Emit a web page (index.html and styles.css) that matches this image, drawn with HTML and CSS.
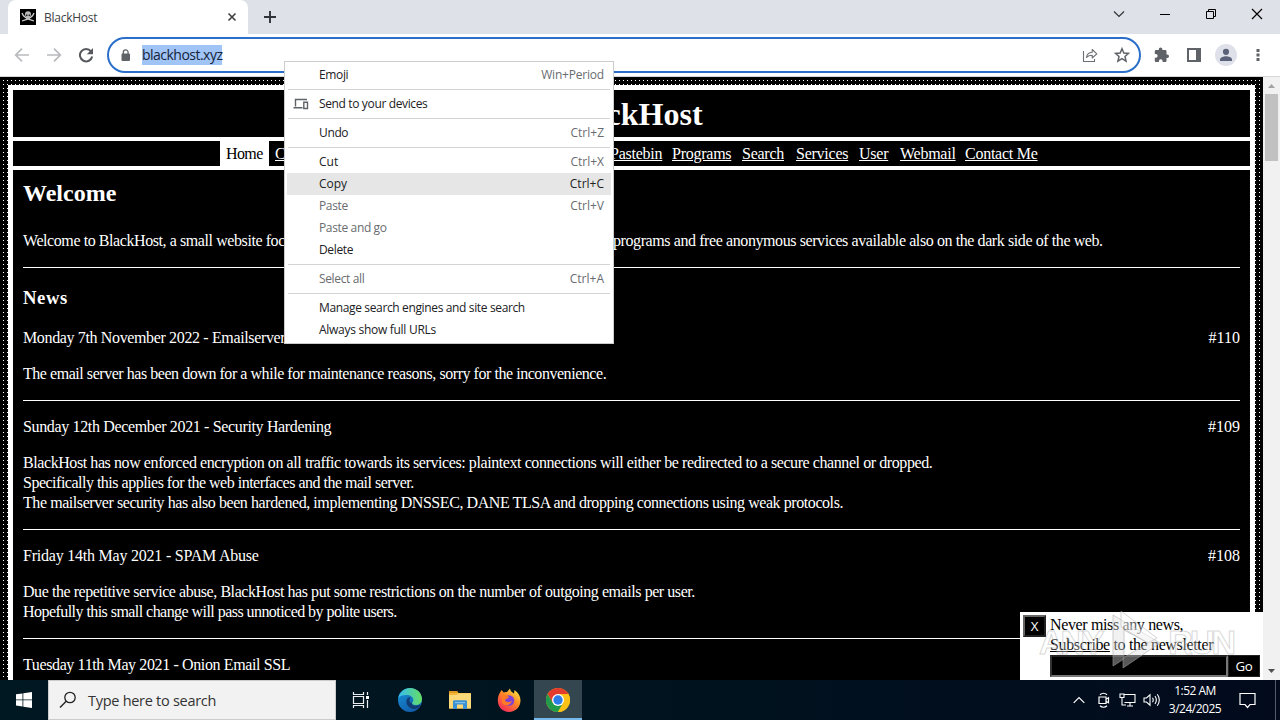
FILE: index.html
```html
<!DOCTYPE html>
<html lang="en">
<head>
<meta charset="utf-8">
<title>BlackHost</title>
<link rel="stylesheet" href="styles.css">
</head>
<body>
<div class="screen">
  <div class="tabstrip">
    <div class="tab">
      <svg class="favicon" width="16" height="16" viewBox="0 0 16 16"><rect width="16" height="16" fill="#000"/><path d="M2 4c1 4 5 6 12 8M14 4c-1 4-5 6-12 8" stroke="#ccc" stroke-width="1.3" fill="none"/><path d="M5 5.5a3 3.2 0 0 1 6 0c0 1.300-.6 1.800-1.200 2.200v2H6.200v-2C5.600 7.300 5 6.800 5 5.500z" fill="#bbb"/><path d="M6 5.500h1.500V7H6zM8.600 5.500h1.500V7H8.600z" fill="#222"/></svg>
      <span class="tab-title">BlackHost</span>
      <svg class="tab-close" width="10" height="10" viewBox="0 0 10 10"><path d="M1.500 1.500l7 7M8.500 1.500l-7 7" stroke="#3c4043" stroke-width="1.600"/></svg>
    </div>
    <svg class="new-tab" width="12" height="12" viewBox="0 0 12 12"><path d="M6 0v12M0 6h12" stroke="#30343a" stroke-width="1.900"/></svg>
    <div class="window-controls">
      <svg width="12" height="12" viewBox="0 0 12 12"><path d="M1 3.500l5 5 5-5" fill="none" stroke="#333" stroke-width="1.200"/></svg>
      <svg width="12" height="12" viewBox="0 0 12 12"><path d="M1 6.500h10" stroke="#000" stroke-width="1"/></svg>
      <svg width="12" height="12" viewBox="0 0 12 12"><path d="M1.500 3.500h7v7h-7zM3.500 3.500v-2h7v7h-2" fill="none" stroke="#000" stroke-width="1"/></svg>
      <svg width="12" height="12" viewBox="0 0 12 12"><path d="M1 1l10 10M11 1L1 11" stroke="#000" stroke-width="1.200"/></svg>
    </div>
  </div>
  <div class="toolbar">
    <svg class="nav-icon" width="16" height="16" viewBox="0 0 16 16"><path d="M15 8H2M8 1.700L1.700 8 8 14.300" fill="none" stroke="#b8babd" stroke-width="1.700"/></svg>
    <svg class="nav-icon" width="16" height="16" viewBox="0 0 16 16"><path d="M1 8h13M8 1.700L14.300 8 8 14.300" fill="none" stroke="#b8babd" stroke-width="1.700"/></svg>
    <svg class="nav-icon" width="16" height="16" viewBox="0 0 16 16"><path d="M13 4.300A6.200 6.200 0 1 0 14.200 9.500" fill="none" stroke="#55585c" stroke-width="2"/><path d="M15 1v6.200H8.800z" fill="#55585c"/></svg>
    <div class="omnibox">
      <svg class="lock" width="10" height="13" viewBox="0 0 10 13"><path d="M1 4.500h7a1 1 0 0 1 1 1V11a1 1 0 0 1-1 1H1.500a1 1 0 0 1-1-1V5.500a1 1 0 0 1 1-1z" fill="#5f6368"/><path d="M2.300 5V3.300a2.400 2.400 0 0 1 4.800 0V5" fill="none" stroke="#5f6368" stroke-width="1.300"/></svg>
      <span class="url">blackhost.xyz</span>
      <svg class="share" width="16" height="16" viewBox="0 0 16 16"><path d="M1.500 4v10.500h11V12" fill="none" stroke="#6c7074" stroke-width="1.100"/><path d="M4.500 10.500c.5-3.500 2.500-5 5.700-5.200V2.500l4.600 4.300-4.600 4.200V8.200c-2.700 0-4.300.7-5.700 2.300z" fill="none" stroke="#6c7074" stroke-width="1.100" stroke-linejoin="round"/></svg>
      <svg class="star" width="16" height="16" viewBox="0 0 16 16"><path d="M8 1.700l1.850 4.300 4.650.4-3.500 3.100 1.050 4.600L8 11.650 3.950 14.100 5 9.500 1.500 6.400l4.650-.4z" fill="none" stroke="#5f6368" stroke-width="1.500"/></svg>
    </div>
    <svg class="ext" width="16" height="16" viewBox="0 0 16 16"><path d="M13.300 7.500h-.8V4.300c0-.8-.6-1.300-1.300-1.300H8.400v-.7a1.800 1.800 0 0 0-3.600 0V3H2C1.300 3 .8 3.600.8 4.300V7h1a1.850 1.850 0 0 1 0 3.700h-1v3c0 .7.600 1.300 1.300 1.300h2.800v-.9a1.850 1.850 0 0 1 3.700 0v.9h2.600c.7 0 1.300-.6 1.300-1.300V11h.8a1.750 1.750 0 0 0 0-3.500z" fill="#5f6368"/></svg>
    <svg class="side" width="14" height="14" viewBox="0 0 14 14"><path d="M1 1h12v12H1z" fill="none" stroke="#5f6368" stroke-width="2"/><path d="M9 1h4v12H9z" fill="#5f6368"/></svg>
    <svg class="avatar" width="22" height="22" viewBox="0 0 22 22"><circle cx="11" cy="11" r="11" fill="#dee1e9"/><circle cx="11" cy="7.800" r="3.100" fill="#5a6178"/><path d="M5 17v-1.500c0-2.200 4-3.300 6-3.300s6 1.100 6 3.300V17z" fill="#5a6178"/></svg>
    <svg class="dots" width="4" height="14" viewBox="0 0 4 14"><path d="M.5 1h3v3h-3zM.5 5.500h3v3h-3zM.5 10h3v3h-3z" fill="#5f6368"/></svg>
  </div>

  <div class="viewport">
    <div class="page">
      <div class="frame">
        <div class="banner"><h1>BlackHost</h1></div>
        <div class="site-nav">
          <span class="current">Home</span>
          <a class="covered">C</a>
          <a class="w-pastebin">Pastebin</a><a class="w-programs">Programs</a><a class="w-search">Search</a><a class="w-services">Services</a><a class="w-user">User</a><a class="w-webmail">Webmail</a><a class="w-contact">Contact Me</a>
        </div>
        <div class="content">
          <h2>Welcome</h2>
          <p class="intro"><span class="intro-start">Welcome to BlackHost, a small website foc</span><span class="intro-end">programs and free anonymous services available also on the dark side of the web.</span></p>
          <hr>
          <h3>News</h3>
          <div class="entry"><span class="t-110">Monday 7th November 2022 - Emailserver</span><span>#110</span></div>
          <p><span class="b-110">The email server has been down for a while for maintenance reasons, sorry for the inconvenience.</span></p>
          <hr>
          <div class="entry"><span class="t-109">Sunday 12th December 2021 - Security Hardening</span><span>#109</span></div>
          <p><span class="b-109a">BlackHost has now enforced encryption on all traffic towards its services: plaintext connections will either be redirected to a secure channel or dropped.</span><br><span class="b-109b">Specifically this applies for the web interfaces and the mail server.</span><br><span class="b-109c">The mailserver security has also been hardened, implementing DNSSEC, DANE TLSA and dropping connections using weak protocols.</span></p>
          <hr>
          <div class="entry"><span class="t-108">Friday 14th May 2021 - SPAM Abuse</span><span>#108</span></div>
          <p><span class="b-108a">Due the repetitive service abuse, BlackHost has put some restrictions on the number of outgoing emails per user.</span><br><span class="b-108b">Hopefully this small change will pass unnoticed by polite users.</span></p>
          <hr>
          <div class="entry"><span class="t-107">Tuesday 11th May 2021 - Onion Email SSL</span></div>
        </div>
      </div>
      <div class="newsletter">
        <span class="dismiss">X</span>
        <div class="signup">
          <div>Never miss any news,</div>
          <div><u>Subscribe</u> to the newsletter</div>
          <div class="signup-row"><span class="email"></span><span class="go">Go</span></div>
        </div>
      </div>
    </div>
    <div class="scrollbar">
      <svg width="17" height="17" viewBox="0 0 17 17"><path d="M5 11l3.500-4 3.500 4z" fill="#a3a3a3"/></svg>
      <div class="thumb"></div>
      <svg class="down" width="17" height="17" viewBox="0 0 17 17"><path d="M5 6l3.500 4L12 6z" fill="#505050"/></svg>
    </div>
  </div>

  <div class="taskbar">
    <div class="start"><svg width="16" height="16" viewBox="0 0 16 16"><path d="M0 2.300L6.500 1.400v6.100H0zM7.300 1.300L16 0v7.500H7.300zM0 8.300h6.500v6.200L0 13.600zM7.300 8.300H16V16l-8.700-1.300z" fill="#fff"/></svg></div>
    <div class="search">
      <svg width="18" height="18" viewBox="0 0 18 18"><circle cx="11" cy="6.500" r="5.200" fill="none" stroke="#222" stroke-width="1.300"/><path d="M7.200 10.300L1 16.500" stroke="#222" stroke-width="1.400"/></svg>
      <span>Type here to search</span>
    </div>
    <div class="app"><svg width="18" height="18" viewBox="0 0 18 18"><path d="M1.500 1v2.500h10V1M1.500 17v-2.500h10V17M1.500 5.500h10v7h-10zM15.500 1v3M15.500 9v8" fill="none" stroke="#eee" stroke-width="1.200"/><path d="M14 5h3v3h-3z" fill="#fff"/></svg></div>
    <div class="app"><svg width="24" height="24" viewBox="0 0 24 24">
      <defs><linearGradient id="eg" x1="0" x2="1"><stop offset="0" stop-color="#35bdf0"/><stop offset="1" stop-color="#66dd63"/></linearGradient><linearGradient id="eb" x1="0" x2=".7" y2="1"><stop offset="0" stop-color="#1593d7"/><stop offset="1" stop-color="#125baa"/></linearGradient></defs>
      <circle cx="12" cy="12" r="12" fill="url(#eb)"/><path d="M.3 10C1.500 4 6.500 0 12 0c7 0 12 5.300 12 11 0 4-3 6-6.200 6-2.500 0-4-1-3.700-2 .5-1 1.200-1.500 1.200-3 0-3-3-5-6.800-5C4.500 7 1.500 8.200.3 10z" fill="url(#eg)"/><path d="M8.500 12.500c-1 5 4 8.800 8 8.500 2-.2 4-1.200 5.200-2.500 1.200-1.200.5-2-.7-1.500-3.500 1.500-8 .5-7-2.500C11 16 11 11 12.500 9c-2 0-3.700 1.500-4 3.500z" fill="#123c72"/></svg></div>
    <div class="app"><svg width="22" height="20" viewBox="0 0 22 20"><path d="M0 2.500V1h8l1.500 2H22v15.500H0z" fill="#f1b83c"/><path d="M0 5h8l1-1.500h13v15H0z" fill="#fcd978"/><path d="M0 1h8l1 2H0z" fill="#e09a24"/><path d="M4 19v-7.500c0-.8.600-1.200 1.200-1.200h11.600c.7 0 1.200.5 1.200 1.200V19h-4v-4.500H8V19z" fill="#3c91d3"/><path d="M6 12h10v1.200H6z" fill="#7fc0ed"/></svg></div>
    <div class="app"><svg width="24" height="24" viewBox="0 0 24 24"><defs><linearGradient id="ff" x1=".9" y1="0" x2=".2" y2="1"><stop offset="0" stop-color="#fff04a"/><stop offset=".45" stop-color="#ff8a24"/><stop offset="1" stop-color="#f2245f"/></linearGradient></defs><path d="M3.200 4.300L4.500 2l2.200 2.500C8 3.800 9 3.800 10 4l3-3.500c.2 2.500 2 3.500 4 5L17.500 2c4 3 6 6.300 6 10.500C23.500 19 18.500 24 12 24S.8 19 .8 12.500c0-3.200.9-6 2.400-8.200z" fill="url(#ff)"/><circle cx="12" cy="12.500" r="5.300" fill="#8241d5"/><path d="M5 8c3-1.500 5-.5 7 1-1 2-3.500 1.300-4 3.200 1.300 2.500 5 2.400 7 .3-.7 4.500-6.500 6.500-10 2.500z" fill="#ff7a27"/></svg></div>
    <div class="app active"><svg width="24" height="24" viewBox="0 0 24 24"><circle cx="12" cy="12" r="12" fill="#fbc116"/><path d="M1.600 6A12 12 0 0 1 22.400 6L12 6.500 6.800 15z" fill="#e33b2e"/><path d="M1.600 6A12 12 0 0 0 12 24l5.200-9L6.800 15z" fill="#229a4b"/><path d="M12 6h10.400A12 12 0 0 1 12 24l5.200-9z" fill="#fbc116"/><circle cx="12" cy="12" r="6" fill="#fff"/><circle cx="12" cy="12" r="4.700" fill="#2d7de9"/></svg></div>
    <div class="tray">
      <svg class="t-up" width="12" height="8" viewBox="0 0 12 8"><path d="M.7 6.800L6 1.500l5.300 5.300" fill="none" stroke="#fff" stroke-width="1.200"/></svg>
      <svg class="t-cam" width="14" height="16" viewBox="0 0 14 16"><path d="M2 5h7v6.500H2zM9 7.200l2.500-1.500v5L9 9.300M3 2.800c2-1.800 5-1.800 7 0M3 13.700c2 1.800 5 1.800 7 0" fill="none" stroke="#fff" stroke-width="1.200"/></svg>
      <svg class="t-net" width="17" height="14" viewBox="0 0 17 14"><path d="M5 1.500h11v8H5.500M11 9.500V13M8 13h6M1 1h4v3.500H1zM3 4.500V12h4" fill="none" stroke="#fff" stroke-width="1.100"/></svg>
      <svg class="t-vol" width="18" height="14" viewBox="0 0 18 14"><path d="M1 5h2.500L7 1.800v10.400L3.500 9H1zM9.500 4.700q1.500 2.300 0 4.600M12 3q2.700 4 0 8M14.300 1.300q4 5.700 0 11.400" fill="none" stroke="#fff" stroke-width="1.100"/></svg>
      <div class="clock"><span class="time">1:52 AM</span><span class="date">3/24/2025</span></div>
      <svg class="t-note" width="17" height="17" viewBox="0 0 17 17"><path d="M1 1.500h15v11h-5L8.500 15.500 6 12.500H1z" fill="none" stroke="#fff" stroke-width="1.200"/></svg>
      <span class="peek"></span>
    </div>
  </div>

  <div class="menu">
    <div class="item"><span>Emoji</span><kbd class="wide">Win+Period</kbd></div>
    <div class="sep"></div>
    <div class="item"><svg class="devices" width="16" height="12" viewBox="0 0 16 12"><path d="M2.500 8.500V1.500H14M.5 9.700h9M10.800 4.200h3.700v6.300h-3.700z" fill="none" stroke="#5f6368" stroke-width="1.400"/></svg><span>Send to your devices</span></div>
    <div class="sep"></div>
    <div class="item"><span>Undo</span><kbd>Ctrl+Z</kbd></div>
    <div class="sep"></div>
    <div class="item"><span class="m-short">Cut</span><kbd>Ctrl+X</kbd></div>
    <div class="item hover"><span class="m-short">Copy</span><kbd>Ctrl+C</kbd></div>
    <div class="item disabled"><span>Paste</span><kbd>Ctrl+V</kbd></div>
    <div class="item disabled"><span>Paste and go</span></div>
    <div class="item"><span>Delete</span></div>
    <div class="sep"></div>
    <div class="item disabled"><span>Select all</span><kbd>Ctrl+A</kbd></div>
    <div class="sep"></div>
    <div class="item"><span>Manage search engines and site search</span></div>
    <div class="item"><span class="m-urls">Always show full URLs</span></div>
  </div>

  <div class="watermark">
    <span>ANY</span>
    <svg width="54" height="64" viewBox="0 0 54 64"><path d="M5 5v51l11-7V20l24 13-25 15v10L52 33z" fill="#ddd" fill-opacity=".5" stroke="#aaa" stroke-opacity=".7"/><path d="M13 1l36 27-9 5-27-16z" fill="#fff" fill-opacity=".45" stroke="#aaa" stroke-opacity=".6"/></svg>
    <span>RUN</span>
  </div>
</div>
</body>
</html>
```
FILE: styles.css
```css
* { box-sizing: border-box; }
body { margin: 0; }
svg { display: block; flex: none; }
.screen { position: relative; width: 1280px; height: 720px; overflow: hidden; display: flex; flex-direction: column; background: #fff; font-family: "Open Sans", "Noto Sans", sans-serif; }

.tabstrip { height: 34px; flex: none; display: flex; background: #dee1e8; padding-left: 8px; }
.tab { width: 240px; height: 34px; background: #fff; border-radius: 8px 8px 0 0; display: flex; align-items: center; padding: 0 11px 0 12px; }
.tab-title { font-size: 12px; color: #3c4043; margin-left: 8px; flex: 1; letter-spacing: -.25px; }
.new-tab { margin: 11px 0 0 16px; }
.window-controls { margin-left: auto; display: flex; gap: 34px; padding: 8px 17px 0 0; }

.toolbar { height: 43px; flex: none; display: flex; align-items: center; padding: 0 20px 0 14px; border-bottom: 1px solid #d5d7da; }
.nav-icon { margin-right: 16px; }
.omnibox { width: 1035px; height: 36px; margin-left: -3px; border: 2px solid #2b6fca; border-radius: 18px; display: flex; align-items: center; padding: 0 9px 0 12px; }
.url { margin-left: 11px; background: #a0c4f5; color: #14233a; font-size: 14px; line-height: 20px; height: 20px; letter-spacing: -.52px; }
.share { margin-left: auto; }
.star { margin-left: 16px; }
.ext { margin-left: 13px; }
.side { margin-left: 17px; }
.avatar { margin-left: 14px; }
.dots { margin-left: 19px; }

.viewport { height: 603px; flex: none; display: flex; overflow: hidden; }
.page { position: relative; width: 1263px; padding: 8px; background: radial-gradient(circle at 3.5px 3.5px, #fff 0 .7px, #000 .8px) 0 0 / 4px 4px; overflow: hidden; font-family: "Liberation Serif", serif; font-size: 16px; color: #fff; }
.frame { height: 620px; border: 5px solid #fff; display: flex; flex-direction: column; gap: 4px; background: #fff; }
.banner { height: 47px; flex: none; background: #000; text-align: center; }
h1 { margin: 0; font-size: 32px; line-height: 48px; }
.site-nav { height: 25px; flex: none; background: #000; display: flex; line-height: 26px; padding-left: 207px; letter-spacing: -.25px; }
.site-nav a { text-decoration: underline; margin-right: 12px; white-space: nowrap; }
.current { width: 49px; padding-left: 6px; background: #fff; color: #000; margin-right: 6px; letter-spacing: -.6px; }
.site-nav .covered { width: 323px; }
.site-nav .w-pastebin { width: 50px; }
.w-programs { width: 58px; }
.w-search { width: 42px; }
.w-services { width: 51px; }
.w-user { width: 29px; }
.w-webmail { width: 53px; }
.w-contact { width: 73px; }
.content { flex: 1; background: #000; padding: 10px; }
h2 { margin: 0 0 25px; font-size: 24px; line-height: 26px; }
h3 { margin: 19px 0; font-size: 18.72px; line-height: 22px; letter-spacing: .6px; }
p { margin: 16px 0; line-height: 20px; white-space: nowrap; }
.intro { display: flex; margin-top: 0; }
.intro-start { width: 590px; letter-spacing: -.42px; }
.intro-end { letter-spacing: -.41px; }
.t-110 { letter-spacing: -.36px; }
.b-110 { letter-spacing: -.455px; }
.t-109 { letter-spacing: -.35px; }
.b-109a { letter-spacing: -.42px; }
.b-109b { letter-spacing: -.5px; }
.b-109c { letter-spacing: -.43px; }
.t-108 { letter-spacing: -.22px; }
.b-108a { letter-spacing: -.44px; }
.b-108b { letter-spacing: -.55px; }
.t-107 { letter-spacing: -.38px; }
hr { margin: 16px 0; border: 0; height: 1px; background: #fff; }
.entry { display: flex; justify-content: space-between; line-height: 20px; }

.newsletter { position: absolute; right: 0; bottom: 0; width: 243px; height: 68px; background: #fff; color: #000; display: flex; padding: 3px; }
.dismiss { width: 23px; height: 22px; margin-right: 4px; border: 2px solid #666; border-right-color: #222; border-bottom-color: #222; background: #000; color: #fff; font: 13.3px/19px "Open Sans", sans-serif; text-align: center; }
.signup { width: 210px; line-height: 20px; letter-spacing: -.36px; }
.signup-row { display: flex; height: 22px; color: #fff; }
.email { width: 178px; background: #000; border: 2px solid #777; border-top-color: #222; border-left-color: #333; }
.go { flex: 1; background: #000; border: 1px solid #222; font: 13.3px/20px "Open Sans", sans-serif; text-align: center; }

.scrollbar { width: 17px; background: #f1f1f1; display: flex; flex-direction: column; align-items: center; }
.thumb { width: 13px; height: 67px; background: #c1c1c1; }
.down { margin-top: auto; }

.taskbar { height: 40px; flex: none; display: flex; background: linear-gradient(90deg, #001821, #00131f 50%, #020a1c); }
.start { width: 48px; display: flex; align-items: center; justify-content: center; }
.search { width: 288px; background: #f2f2f2; border: 1px solid #ccc; display: flex; align-items: center; padding-left: 10px; gap: 11px; font-size: 14.5px; letter-spacing: -.28px; color: #333; }
.app { width: 49.5px; display: flex; align-items: center; justify-content: center; }
.app.active { background: #34464f; border-bottom: 2px solid #76b9ed; padding-top: 2px; width: 48px; }
.tray { margin-left: auto; width: 207px; display: flex; align-items: center; color: #fff; }
.t-cam { margin-left: 12px; }
.t-net { margin-left: 8px; }
.t-vol { margin-left: 7px; }
.clock { width: 64px; margin-left: 2px; font-size: 12px; line-height: 18px; display: flex; flex-direction: column; align-items: center; white-space: nowrap; letter-spacing: -.5px; }
.t-note { margin-left: 12px; }
.peek { width: 1px; height: 40px; background: #535b68; margin-left: auto; margin-right: 4px; }

.menu { position: absolute; left: 284px; top: 61px; width: 330px; height: 283px; background: #fff; border: 1px solid #ccc; padding: 2px; font-size: 12px; color: #202124; }
.item { position: relative; height: 22px; display: flex; align-items: center; justify-content: space-between; padding: 0 7px 1px 32px; white-space: nowrap; letter-spacing: -.36px; }
.item .m-short { letter-spacing: 0; }
.item .m-urls { letter-spacing: -.28px; }
.item kbd { font: inherit; color: #696c70; letter-spacing: 0; }
.item .wide { letter-spacing: -.2px; }
.item.hover { background: #e6e6e6; }
.item.hover kbd { color: #202124; }
.disabled { color: #696c70; }
.sep { height: 7px; padding: 3px 1px; }
.sep::before { content: ""; display: block; height: 1px; background: #d4d4d4; }
.devices { position: absolute; left: 6px; top: 5px; }

.watermark { position: absolute; left: 1039px; top: 610px; width: 194px; height: 64px; display: flex; align-items: center; justify-content: space-between; font: bold 34px "Liberation Sans", sans-serif; color: rgba(255,255,255,.4); -webkit-text-stroke: 1px rgba(160,160,160,.5); opacity: .8; letter-spacing: -3px; }
```
